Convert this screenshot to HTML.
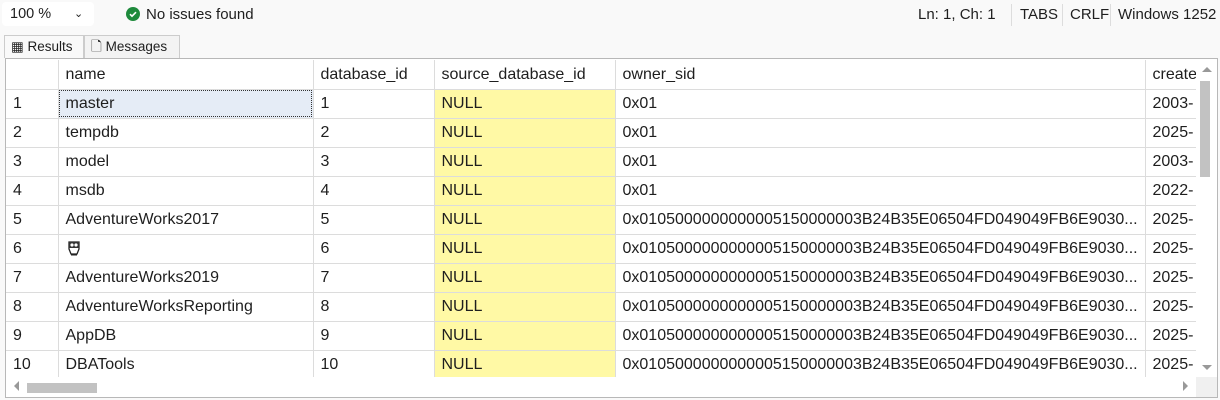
<!DOCTYPE html><html><head><style>
body{margin:0;width:1220px;height:400px;background:#f9f9f9;font-family:"Liberation Sans",sans-serif;position:relative;overflow:hidden;color:#1e1e1e}
.abs{position:absolute}
.zoom{left:2px;top:2px;width:92px;height:24px;background:#fff;border-radius:4px;font-size:14.5px;line-height:24px;padding-left:8px;box-sizing:border-box}
.st{font-size:15px;top:6px}
.tab{top:35px;height:23px;font-size:13.5px;line-height:22px;border:1px solid #ccc;border-bottom:none;background:#f3f3f3;box-sizing:border-box}
.grid{left:5px;top:58px;width:1213px;height:340px;border:1px solid #b8b8b8;background:#fff;box-sizing:border-box;overflow:hidden}
table{border-collapse:collapse;position:absolute;left:0;top:1px;table-layout:fixed;font-size:16px}
td{height:28px;border-right:1px solid #dcdcdc;border-bottom:1px solid #dcdcdc;padding:1px 0 0 7px;white-space:nowrap;overflow:hidden;box-sizing:border-box}
tr td{height:29px}
.y{background:#fff9a5}
.sel{background:#e5ecf6;outline:1px dotted #333;outline-offset:-2px}
</style></head><body>
<div class="abs zoom">100 %<span style="position:absolute;left:72px;top:0;font-size:11px">&#8964;</span></div>
<svg class="abs" style="left:126px;top:7px" width="14" height="14"><circle cx="7" cy="7" r="7" fill="#1e8a3c"/><path d="M4 7.2l2 2 4-4" stroke="#fff" stroke-width="1.6" fill="none"/></svg>
<div class="abs st" style="left:146px">No issues found</div>
<div class="abs st" style="left:918px">Ln: 1, Ch: 1</div>
<div class="abs" style="left:1011px;top:4px;width:1px;height:22px;background:#ddd"></div>
<div class="abs st" style="left:1020px">TABS</div>
<div class="abs" style="left:1062px;top:4px;width:1px;height:22px;background:#ddd"></div>
<div class="abs st" style="left:1070px">CRLF</div>
<div class="abs" style="left:1110px;top:4px;width:1px;height:22px;background:#ddd"></div>
<div class="abs st" style="left:1118px">Windows 1252</div>
<div class="abs tab" style="left:4px;width:80px;padding-left:6px;background:#f9f9f9">&#9638; Results</div>
<div class="abs tab" style="left:84px;width:96px;padding-left:6px">&#128459; Messages</div>
<div class="abs grid">
<table>
<colgroup><col style="width:52px"><col style="width:255px"><col style="width:121px"><col style="width:181px"><col style="width:530px"><col style="width:60px"></colgroup>
<tr class="h"><td></td><td>name</td><td>database_id</td><td>source_database_id</td><td>owner_sid</td><td>create</td></tr>
<tr><td>1</td><td class="sel">master</td><td>1</td><td class="y">NULL</td><td>0x01</td><td>2003-</td></tr>
<tr><td>2</td><td>tempdb</td><td>2</td><td class="y">NULL</td><td>0x01</td><td>2025-</td></tr>
<tr><td>3</td><td>model</td><td>3</td><td class="y">NULL</td><td>0x01</td><td>2003-</td></tr>
<tr><td>4</td><td>msdb</td><td>4</td><td class="y">NULL</td><td>0x01</td><td>2022-</td></tr>
<tr><td>5</td><td>AdventureWorks2017</td><td>5</td><td class="y">NULL</td><td>0x0105000000000005150000003B24B35E06504FD049049FB6E9030...</td><td>2025-</td></tr>
<tr><td>6</td><td><svg width="16" height="18" viewBox="0 0 16 18" style="vertical-align:middle"><path d="M3 2h10v7l-2 5H5L3 9z" fill="#fff" stroke="#222" stroke-width="1.3"/><rect x="3" y="2" width="10" height="6" fill="#333"/><circle cx="6" cy="5" r="1.6" fill="#fff"/><circle cx="10" cy="5" r="1.6" fill="#fff"/><path d="M5 15h6" stroke="#222"/></svg></td><td>6</td><td class="y">NULL</td><td>0x0105000000000005150000003B24B35E06504FD049049FB6E9030...</td><td>2025-</td></tr>
<tr><td>7</td><td>AdventureWorks2019</td><td>7</td><td class="y">NULL</td><td>0x0105000000000005150000003B24B35E06504FD049049FB6E9030...</td><td>2025-</td></tr>
<tr><td>8</td><td>AdventureWorksReporting</td><td>8</td><td class="y">NULL</td><td>0x0105000000000005150000003B24B35E06504FD049049FB6E9030...</td><td>2025-</td></tr>
<tr><td>9</td><td>AppDB</td><td>9</td><td class="y">NULL</td><td>0x0105000000000005150000003B24B35E06504FD049049FB6E9030...</td><td>2025-</td></tr>
<tr><td>10</td><td>DBATools</td><td>10</td><td class="y">NULL</td><td>0x0105000000000005150000003B24B35E06504FD049049FB6E9030...</td><td>2025-</td></tr>
</table>
<div class="abs" style="left:1190px;top:0;width:22px;height:320px;background:#fff"></div>
<div class="abs" style="left:1196px;top:8px;width:0;height:0;border:5px solid transparent;border-bottom-color:#999;border-top:none"></div>
<div class="abs" style="left:1194px;top:22px;width:10px;height:96px;background:#c2c2c2"></div>
<div class="abs" style="left:1196px;top:306px;width:0;height:0;border:5px solid transparent;border-top-color:#999;border-bottom:none"></div>
<div class="abs" style="left:0;top:318px;width:1190px;height:22px;background:#fff"></div>
<div class="abs" style="left:8px;top:322px;width:0;height:0;border:5px solid transparent;border-right-color:#999;border-left:none"></div>
<div class="abs" style="left:21px;top:324px;width:70px;height:10px;background:#c2c2c2"></div>
<div class="abs" style="left:1177px;top:322px;width:0;height:0;border:5px solid transparent;border-left-color:#999;border-right:none"></div>
<div class="abs" style="left:1190px;top:318px;width:22px;height:22px;background:#f0f0f0"></div>
</div>
</body></html>
